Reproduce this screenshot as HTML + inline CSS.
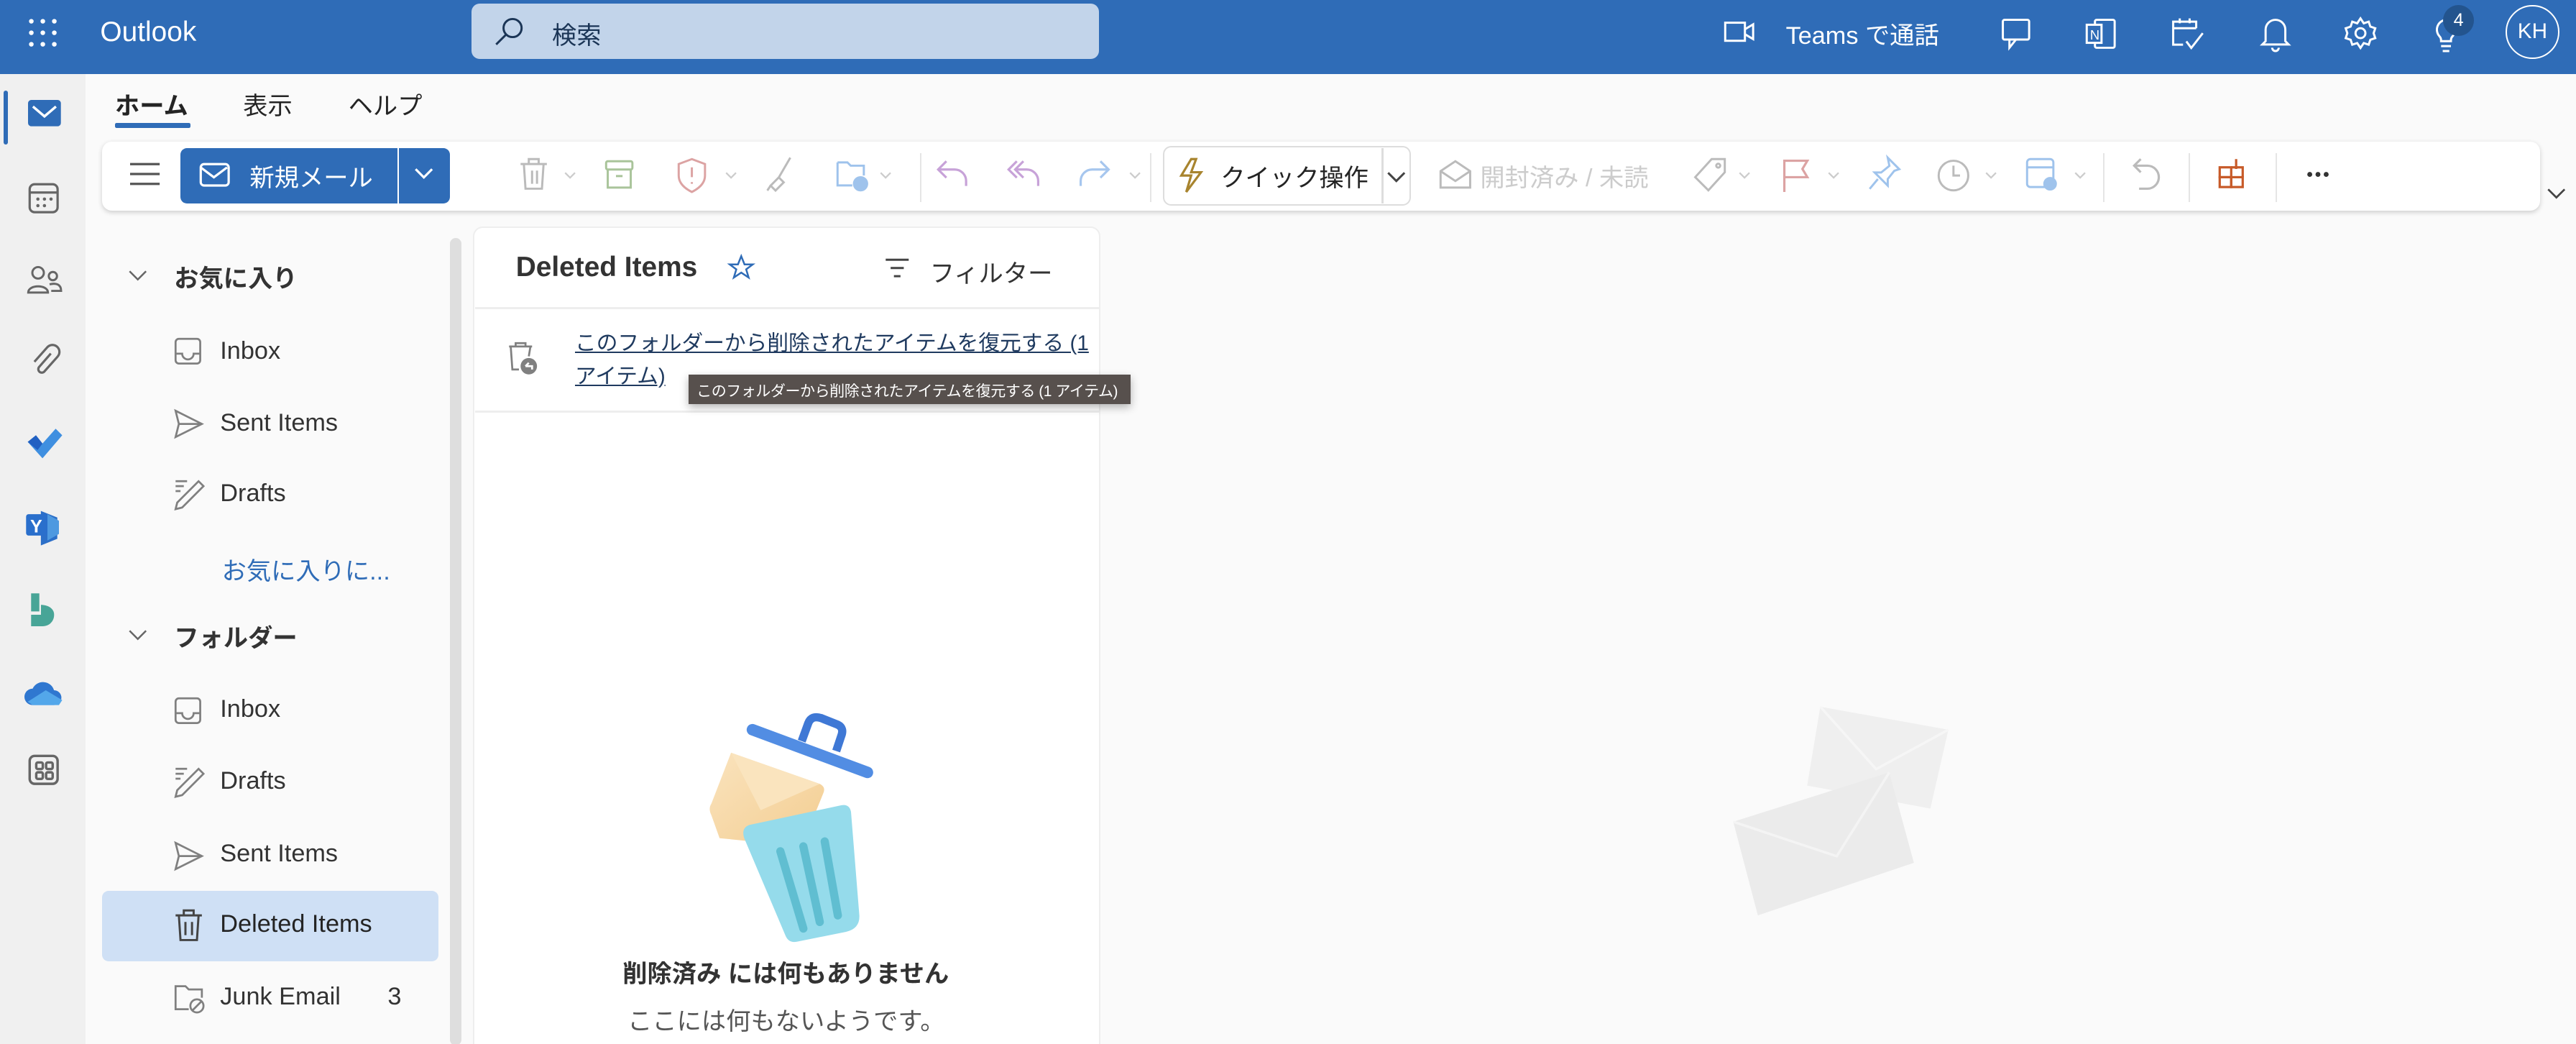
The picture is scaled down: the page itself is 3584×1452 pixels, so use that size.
<!DOCTYPE html>
<html><head><meta charset="utf-8">
<style>
*{box-sizing:border-box;margin:0;padding:0}
html,body{width:3584px;height:1452px;overflow:hidden;background:#fafafa}
#w{width:1568px;height:636px;zoom:2.285714;position:relative;font-family:"Liberation Sans","Noto Sans CJK JP",sans-serif;color:#242424;background:#fafafa;overflow:hidden}
.a{position:absolute}
.t{position:absolute;white-space:nowrap}
svg{position:absolute;overflow:visible}
</style></head><body><div id="w">
<!-- top bar -->
<div class="a" style="left:0;top:0;width:1568px;height:45px;background:#2f6cb7"></div>
<svg style="left:17px;top:11px" width="20" height="20"><g fill="#fff"><circle cx="2" cy="2" r="1.4"/><circle cx="9" cy="2" r="1.4"/><circle cx="16" cy="2" r="1.4"/><circle cx="2" cy="9" r="1.4"/><circle cx="9" cy="9" r="1.4"/><circle cx="16" cy="9" r="1.4"/><circle cx="2" cy="16" r="1.4"/><circle cx="16" cy="16" r="1.4"/><circle cx="9" cy="16" r="1.4"/></g></svg>
<div class="t" style="left:61px;top:10px;font-size:17px;color:#fff">Outlook</div>
<div class="a" style="left:287px;top:2px;width:382px;height:34px;background:#c2d4ea;border-radius:5px"></div>
<svg style="left:301px;top:10px" width="18" height="18"><circle cx="11" cy="7" r="5.5" fill="none" stroke="#1b3556" stroke-width="1.3"/><path d="M7 11L1 17" stroke="#1b3556" stroke-width="1.3"/></svg>
<div class="t" style="left:336px;top:9px;font-size:15px;color:#1b3556">検索</div>
<svg style="left:1049px;top:12px" width="20" height="16"><rect x="1" y="2" width="12" height="11" fill="none" stroke="#fff" stroke-width="1.3"/><path d="M13 6l5-3v9l-5-3" fill="none" stroke="#fff" stroke-width="1.3"/></svg>
<div class="t" style="left:1087px;top:9px;font-size:15px;color:#fff">Teams で通話</div>
<svg style="left:1217px;top:10px" width="22" height="22" fill="none" stroke="#fff" stroke-width="1.3"><rect x="2" y="2" width="16" height="12" rx="1"/><path d="M6 14v5l4-5"/></svg>
<svg style="left:1269px;top:10px" width="22" height="22" fill="none" stroke="#fff" stroke-width="1.3"><rect x="6" y="2" width="12" height="17" rx="1"/><rect x="1" y="5" width="9" height="11" fill="#2f6cb7"/><text x="3" y="14" font-size="8" fill="#fff" stroke="none">N</text></svg>
<svg style="left:1321px;top:9px" width="22" height="22" fill="none" stroke="#fff" stroke-width="1.3"><path d="M16 8V4H2v14h6"/><path d="M2 8h14M6 2v3M12 2v3"/><path d="M10 16l3 4 7-9"/></svg>
<svg style="left:1375px;top:10px" width="20" height="22" fill="none" stroke="#fff" stroke-width="1.3"><path d="M4 15V8a6 6 0 0112 0v7l2 2H2z"/><path d="M8 19a2 2 0 004 0"/></svg>
<svg style="left:1426px;top:9px" width="22" height="22" fill="none" stroke="#fff" stroke-width="1.3"><circle cx="11" cy="11" r="3"/><path d="M11 2l2 3 3-1 1 3 3 1-1 3 1 3-3 1-1 3-3-1-2 3-2-3-3 1-1-3-3-1 1-3-1-3 3-1 1-3 3 1z"/></svg>
<svg style="left:1478px;top:10px" width="22" height="24" fill="none" stroke="#fff" stroke-width="1.3"><path d="M11 2a6 6 0 00-4 10c1 1 1 2 1 3h6c0-1 0-2 1-3a6 6 0 00-4-10zM8 18h6M9 21h4"/></svg>
<div class="a" style="left:1487px;top:3px;width:19px;height:19px;border-radius:50%;background:#23548e;color:#fff;font-size:11px;text-align:center;line-height:19px">4</div>
<div class="a" style="left:1525px;top:3px;width:33px;height:33px;border-radius:50%;border:1.3px solid #fff;color:#fff;font-size:13px;text-align:center;line-height:31px">KH</div>

<!-- left rail -->
<div class="a" style="left:0;top:45px;width:52px;height:591px;background:#f0f0f0"></div>
<div class="a" style="left:2px;top:55px;width:3px;height:33px;background:#2f6cb7;border-radius:2px"></div>
<svg style="left:17px;top:61px" width="20" height="18"><rect x="0" y="0" width="20" height="16" rx="2" fill="#2f6cb7"/><path d="M3 4l7 6 7-6" fill="none" stroke="#fff" stroke-width="1.5"/></svg>
<svg style="left:17px;top:111px" width="20" height="20" fill="none" stroke="#666" stroke-width="1.4"><rect x="1" y="1" width="17" height="17" rx="3"/><path d="M1 6h17"/><g fill="#666" stroke="none"><circle cx="6" cy="10" r="1"/><circle cx="10" cy="10" r="1"/><circle cx="14" cy="10" r="1"/><circle cx="6" cy="14" r="1"/><circle cx="10" cy="14" r="1"/></g></svg>
<svg style="left:16px;top:161px" width="22" height="18" fill="none" stroke="#666" stroke-width="1.3"><circle cx="7" cy="5" r="3.5"/><path d="M1 17c0-5 12-5 12 0z"/><circle cx="16" cy="7" r="2.5"/><path d="M14 12c4-1 7 0 7 4h-6"/></svg>
<svg style="left:18px;top:209px" width="18" height="22" fill="none" stroke="#666" stroke-width="1.4"><path d="M13 6L6 14a2 2 0 003 3l8-9a4 4 0 00-6-6L3 11"/></svg>
<svg style="left:15px;top:260px" width="24" height="20"><path d="M2 9l5-4 4 5L19 1l4 4-12 14z" fill="#3f8fe0"/><path d="M2 9l5-4 4 5-3 4z" fill="#2160c2"/></svg>
<svg style="left:15px;top:309px" width="24" height="24"><path d="M10 2l10 4v13l-10 4z" fill="#2c6fc8"/><path d="M14 4l7 4v8l-7 4z" fill="#4e99e0"/><rect x="1" y="4" width="13" height="13" rx="1.5" fill="#2a6fcc"/><text x="3.5" y="15" font-size="11" font-weight="bold" fill="#fff" font-family="Liberation Sans">Y</text></svg>
<svg style="left:18px;top:360px" width="20" height="22" fill="#48a597"><path d="M1 1h5v11H1z"/><path d="M7 8c4 0 8 2 8 6H7z"/><path d="M1 14h14c0 4-3 7-7 7H1z"/></svg>
<svg style="left:15px;top:413px" width="24" height="18"><path d="M5 16a5 5 0 010-10 7 7 0 0113 1 4.5 4.5 0 010 9z" fill="#2f77d0"/><path d="M2 14l11-7 10 6-2 3H5z" fill="#53a7ea"/></svg>
<svg style="left:17px;top:459px" width="20" height="20" fill="none" stroke="#666" stroke-width="1.5"><rect x="1" y="1" width="17" height="17" rx="3"/><rect x="5" y="5" width="4" height="4" rx="1"/><rect x="11" y="5" width="4" height="4" rx="1"/><rect x="5" y="11" width="4" height="4" rx="1"/><rect x="11" y="11" width="4" height="4" rx="1"/></svg>

<!-- tabs -->
<div class="t" style="left:70px;top:52px;font-size:15px;font-weight:bold">ホーム</div>
<div class="a" style="left:70px;top:75px;width:46px;height:3px;background:#2f6cb7;border-radius:1px"></div>
<div class="t" style="left:148px;top:52px;font-size:15px">表示</div>
<div class="t" style="left:212px;top:52px;font-size:15px">ヘルプ</div>

<!-- toolbar -->
<div class="a" style="left:62px;top:86px;width:1484px;height:42px;background:#fff;border-radius:6px;box-shadow:0 1px 3px rgba(0,0,0,.18)"></div>
<svg style="left:79px;top:99px" width="18" height="14" stroke="#555" stroke-width="1.4"><path d="M0 1h18M0 7h18M0 13h18"/></svg>
<div class="a" style="left:110px;top:90px;width:164px;height:34px;background:#2f6cb7;border-radius:4px"></div>
<div class="a" style="left:242px;top:90px;width:1px;height:34px;background:#fff"></div>
<svg style="left:121px;top:99px" width="20" height="16" fill="none" stroke="#fff" stroke-width="1.4"><rect x="1" y="1" width="17" height="13" rx="2"/><path d="M1 3l8 6 8-6"/></svg>
<div class="t" style="left:152px;top:96px;font-size:15px;color:#fff">新規メール</div>
<svg style="left:252px;top:102px" width="12" height="8" fill="none" stroke="#fff" stroke-width="1.4"><path d="M1 1l5 5 5-5"/></svg>
<svg style="left:316px;top:96px" width="18" height="20" fill="none" stroke="#bbb" stroke-width="1.3"><path d="M1 4h16M6 4V1h6v3M3 4l1 15h10l1-15M8 8v8M11 8v8"/></svg>
<svg style="left:368px;top:97px" width="20" height="20" fill="none" stroke="#a9c49a" stroke-width="1.3"><rect x="1" y="1" width="16" height="5" rx="1"/><path d="M2 6v11h14V6M7 10h4"/></svg>
<svg style="left:412px;top:96px" width="20" height="22" fill="none" stroke="#dca3a3" stroke-width="1.3"><path d="M9 1l8 3v7c0 5-4 8-8 10-4-2-8-5-8-10V4z"/><path d="M9 6v6M9 15v1"/></svg>
<svg style="left:465px;top:95px" width="20" height="22" fill="none" stroke="#bbb" stroke-width="1.3"><path d="M16 1L9 13M9 13l-5 5 3 3 5-5zM4 18l-2 3"/></svg>
<svg style="left:509px;top:96px" width="22" height="22" fill="none" stroke="#9fc3ec" stroke-width="1.3"><path d="M1 3h6l2 2h8v6M1 3v14h9"/><circle cx="15" cy="16" r="4" fill="#9fc3ec"/></svg>
<svg style="left:570px;top:97px" width="20" height="18" fill="none" stroke="#c7a2d8" stroke-width="1.4"><path d="M6 1L1 6l5 5M1 6h10a7 7 0 017 7v3"/></svg>
<svg style="left:613px;top:97px" width="22" height="18" fill="none" stroke="#c7a2d8" stroke-width="1.4"><path d="M6 1L1 6l5 5M10 1L5 6l5 5M5 6h7a7 7 0 017 7v3"/></svg>
<svg style="left:656px;top:97px" width="20" height="18" fill="none" stroke="#a6c6ee" stroke-width="1.4"><path d="M14 1l5 5-5 5M19 6H9a7 7 0 00-7 7v3"/></svg>
<div class="a" style="left:560px;top:93px;width:1px;height:30px;background:#e5e5e5"></div>
<div class="a" style="left:700px;top:93px;width:1px;height:30px;background:#e5e5e5"></div>
<div class="a" style="left:708px;top:89px;width:151px;height:36px;border:1px solid #ddd;border-radius:5px"></div>
<div class="a" style="left:841px;top:90px;width:1px;height:34px;background:#ddd"></div>
<svg style="left:717px;top:96px" width="16" height="22" fill="none" stroke="#a8842e" stroke-width="1.4"><path d="M8 1L2 11h6l-3 10 9-12H8l3-8z"/></svg>
<div class="t" style="left:743px;top:96px;font-size:15px">クイック操作</div>
<svg style="left:844px;top:104px" width="12" height="8" fill="none" stroke="#444" stroke-width="1.3"><path d="M1 1l5 5 5-5"/></svg>
<svg style="left:876px;top:97px" width="20" height="18" fill="none" stroke="#bbb" stroke-width="1.3"><path d="M1 7l9-6 9 6v10H1zM1 7l9 6 9-6"/></svg>
<div class="t" style="left:901px;top:96px;font-size:15px;color:#ccc">開封済み / 未読</div>
<svg style="left:1030px;top:96px" width="22" height="22" fill="none" stroke="#bbb" stroke-width="1.3"><path d="M12 1h8v8L10 20l-8-8z"/><circle cx="16" cy="5" r="1.2"/></svg>
<svg style="left:1084px;top:96px" width="18" height="22" fill="none" stroke="#dca3a3" stroke-width="1.4"><path d="M2 21V2h14l-3 5 3 5H2"/></svg>
<svg style="left:1137px;top:95px" width="20" height="22" fill="none" stroke="#9fc3ec" stroke-width="1.3"><path d="M12 1l7 7-3 1-4 5 0 4-8-8 4 0 5-4zM6 14l-5 6"/></svg>
<svg style="left:1179px;top:96px" width="22" height="22" fill="none" stroke="#bbb" stroke-width="1.3"><circle cx="10" cy="11" r="9"/><path d="M10 5v6h4"/></svg>
<svg style="left:1233px;top:96px" width="22" height="22" fill="none" stroke="#9fc3ec" stroke-width="1.3"><rect x="1" y="1" width="16" height="17" rx="2"/><path d="M1 6h16"/><circle cx="15" cy="16" r="3.5" fill="#9fc3ec"/></svg>
<div class="a" style="left:1280px;top:93px;width:1px;height:30px;background:#e5e5e5"></div>
<svg style="left:1298px;top:96px" width="18" height="22" fill="none" stroke="#bbb" stroke-width="1.4"><path d="M5 1L1 5l4 4M1 5h8a7 7 0 010 14H4"/></svg>
<div class="a" style="left:1332px;top:93px;width:1px;height:30px;background:#e5e5e5"></div>
<svg style="left:1350px;top:96px" width="18" height="20" fill="none" stroke="#c75a28" stroke-width="1.4"><rect x="1" y="6" width="7" height="6"/><rect x="1" y="12" width="7" height="6"/><rect x="8" y="12" width="7" height="6"/><path d="M8 6h7v6M11 1v6"/></svg>
<div class="a" style="left:1385px;top:93px;width:1px;height:30px;background:#e5e5e5"></div>
<svg style="left:1404px;top:104px" width="16" height="4" fill="#333"><circle cx="2" cy="2" r="1.5"/><circle cx="7" cy="2" r="1.5"/><circle cx="12" cy="2" r="1.5"/></svg>
<svg style="left:1550px;top:114px" width="12" height="8" fill="none" stroke="#444" stroke-width="1.2"><path d="M1 1l5 5 5-5"/></svg>
<svg style="left:343px;top:104px" width="8" height="6" fill="none" stroke="#ccc"><path d="M1 1l3 3 3-3"/></svg>
<svg style="left:441px;top:104px" width="8" height="6" fill="none" stroke="#ccc"><path d="M1 1l3 3 3-3"/></svg>
<svg style="left:535px;top:104px" width="8" height="6" fill="none" stroke="#ccc"><path d="M1 1l3 3 3-3"/></svg>
<svg style="left:687px;top:104px" width="8" height="6" fill="none" stroke="#ccc"><path d="M1 1l3 3 3-3"/></svg>
<svg style="left:1058px;top:104px" width="8" height="6" fill="none" stroke="#ccc"><path d="M1 1l3 3 3-3"/></svg>
<svg style="left:1112px;top:104px" width="8" height="6" fill="none" stroke="#ccc"><path d="M1 1l3 3 3-3"/></svg>
<svg style="left:1208px;top:104px" width="8" height="6" fill="none" stroke="#ccc"><path d="M1 1l3 3 3-3"/></svg>
<svg style="left:1262px;top:104px" width="8" height="6" fill="none" stroke="#ccc"><path d="M1 1l3 3 3-3"/></svg>

<!-- folder pane -->
<div class="a" style="left:274px;top:145px;width:7px;height:491px;background:#dedede;border-radius:4px"></div>
<svg style="left:78px;top:164px" width="12" height="8" fill="none" stroke="#666" stroke-width="1.1"><path d="M1 1l5 5 5-5"/></svg>
<div class="t" style="left:106px;top:157px;font-size:15px;font-weight:bold;color:#333">お気に入り</div>
<svg style="left:78px;top:383px" width="12" height="8" fill="none" stroke="#666" stroke-width="1.1"><path d="M1 1l5 5 5-5"/></svg>
<div class="t" style="left:106px;top:376px;font-size:15px;font-weight:bold;color:#333">フォルダー</div>

<svg style="left:106px;top:205px" width="18" height="18" fill="none" stroke="#808080" stroke-width="1.2"><rect x="1" y="1" width="15" height="15" rx="2"/><path d="M1 10h4a3 3 0 007 0h4"/></svg>
<div class="t" style="left:134px;top:205px;font-size:15px;color:#333">Inbox</div>
<svg style="left:106px;top:249px" width="18" height="18" fill="none" stroke="#808080" stroke-width="1.2"><path d="M1 1l16 8-16 8 2-8zM3 9h14"/></svg>
<div class="t" style="left:134px;top:249px;font-size:15px;color:#333">Sent Items</div>
<svg style="left:106px;top:292px" width="18" height="20" fill="none" stroke="#808080" stroke-width="1.2"><path d="M1 1h7M1 4h5M1 7h3M15 1l3 3L5 17l-4 1 1-4z"/></svg>
<div class="t" style="left:134px;top:292px;font-size:15px;color:#333">Drafts</div>
<div class="t" style="left:135px;top:335px;font-size:15px;color:#2f6cb7">お気に入りに...</div>

<svg style="left:106px;top:424px" width="18" height="18" fill="none" stroke="#808080" stroke-width="1.2"><rect x="1" y="1" width="15" height="15" rx="2"/><path d="M1 10h4a3 3 0 007 0h4"/></svg>
<div class="t" style="left:134px;top:423px;font-size:15px;color:#333">Inbox</div>
<svg style="left:106px;top:467px" width="18" height="20" fill="none" stroke="#808080" stroke-width="1.2"><path d="M1 1h7M1 4h5M1 7h3M15 1l3 3L5 17l-4 1 1-4z"/></svg>
<div class="t" style="left:134px;top:467px;font-size:15px;color:#333">Drafts</div>
<svg style="left:106px;top:512px" width="18" height="18" fill="none" stroke="#808080" stroke-width="1.2"><path d="M1 1l16 8-16 8 2-8zM3 9h14"/></svg>
<div class="t" style="left:134px;top:511px;font-size:15px;color:#333">Sent Items</div>
<div class="a" style="left:62px;top:542px;width:205px;height:43px;background:#cfe0f5;border-radius:4px"></div>
<svg style="left:106px;top:553px" width="18" height="20" fill="none" stroke="#444" stroke-width="1.3"><path d="M1 4h16M6 4V1h6v3M3 4l1 15h10l1-15M7 8v8M11 8v8"/></svg>
<div class="t" style="left:134px;top:554px;font-size:15px;color:#242424">Deleted Items</div>
<svg style="left:106px;top:598px" width="20" height="20" fill="none" stroke="#808080" stroke-width="1.2"><path d="M9 16H1V2h6l2 2h8v5"/><circle cx="14" cy="14" r="4"/><path d="M11 17l6-6"/></svg>
<div class="t" style="left:134px;top:598px;font-size:15px;color:#333">Junk Email</div>
<div class="t" style="left:236px;top:598px;font-size:15px;color:#333">3</div>

<!-- message list -->
<div class="a" style="left:288px;top:138px;width:382px;height:500px;background:#fff;border-radius:6px 6px 0 0;border:1px solid #eee"></div>
<div class="t" style="left:314px;top:153px;font-size:17px;font-weight:bold;color:#333">Deleted Items</div>
<svg style="left:443px;top:155px" width="16" height="16" fill="none" stroke="#2f6cb7" stroke-width="1.1"><path d="M8 1l2 5h5l-4 3 1.5 5L8 11l-4.5 3L5 9 1 6h5z"/></svg>
<svg style="left:538px;top:157px" width="16" height="12" stroke="#444" stroke-width="1.3"><path d="M1 1h14M4 6h8M6 11h4"/></svg>
<div class="t" style="left:566px;top:154px;font-size:15px;color:#333">フィルター</div>
<div class="a" style="left:289px;top:187px;width:380px;height:1px;background:#eee"></div>
<div class="a" style="left:289px;top:250px;width:380px;height:1px;background:#eee"></div>
<svg style="left:309px;top:208px" width="22" height="22" fill="none" stroke="#808080" stroke-width="1.2"><path d="M1 3h14M5 3V1h6v2M2 3l1 14h4"/><path d="M14 3l-1 6"/><circle cx="13" cy="15" r="5" fill="#808080" stroke="none"/><path d="M11 15l2-2M11 15h4v2" stroke="#fff"/></svg>
<div class="t" style="left:350px;top:199px;font-size:13px;color:#1f3a5f;text-decoration:underline;line-height:20px">このフォルダーから削除されたアイテムを復元する (1<br>アイテム)</div>
<div class="a" style="left:419px;top:228px;width:269px;height:18px;background:#57504d;box-shadow:0 2px 5px rgba(0,0,0,.3)"></div>
<div class="t" style="left:424px;top:231px;font-size:9.2px;letter-spacing:-0.2px;color:#fff">このフォルダーから削除されたアイテムを復元する (1 アイテム)</div>

<svg style="left:0;top:0" width="1568" height="636">
<defs><linearGradient id="env" x1="0" y1="0" x2="1" y2="1"><stop offset="0" stop-color="#fae3bd"/><stop offset="1" stop-color="#f3cd91"/></linearGradient></defs>
<path d="M445 458 L499 477 Q503 479 501 483 L488 515 L438 510 L433 496 Q431 492 433 489 Z" fill="url(#env)"/>
<path d="M445 458 L499 477 L463 493 Z" fill="#fae4be"/>
<line x1="458" y1="444" x2="528" y2="470" stroke="#528de3" stroke-width="7" stroke-linecap="round"/>
<path d="M488 451 L492 440 Q494 435 500 437 L510 441 Q514 443 512 448 L509 457" fill="none" stroke="#3f78d5" stroke-width="5"/>
<path d="M456 502 L512 490 Q517 489 518 494 L523 556 Q524 565 515 567 L485 573 Q480 574 478 569 L453 510 Q451 504 456 502 Z" fill="#95dbeb"/>
<g stroke="#60bed1" stroke-width="5" stroke-linecap="round"><line x1="475" y1="518" x2="489" y2="565"/><line x1="489" y1="515" x2="499" y2="561"/><line x1="502" y1="512" x2="510" y2="557"/></g>
<g opacity=".5">
<path d="M1108 430 L1186 444 L1175 492 L1100 478 Z" fill="#e6e6e6"/>
<path d="M1108 430 L1142 468 L1186 444" fill="none" stroke="#f4f4f4" stroke-width="1.5"/>
<path d="M1055 500 L1150 470 L1165 525 L1070 557 Z" fill="#dedede"/>
<path d="M1055 500 L1118 521 L1150 470" fill="none" stroke="#f0f0f0" stroke-width="1.5"/>
</g>
</svg>
<div class="t" style="left:379px;top:580px;font-size:15px;font-weight:bold;color:#333">削除済み には何もありません</div>
<div class="t" style="left:382px;top:609px;font-size:15px;color:#555">ここには何もないようです。</div>
</div></body></html>
